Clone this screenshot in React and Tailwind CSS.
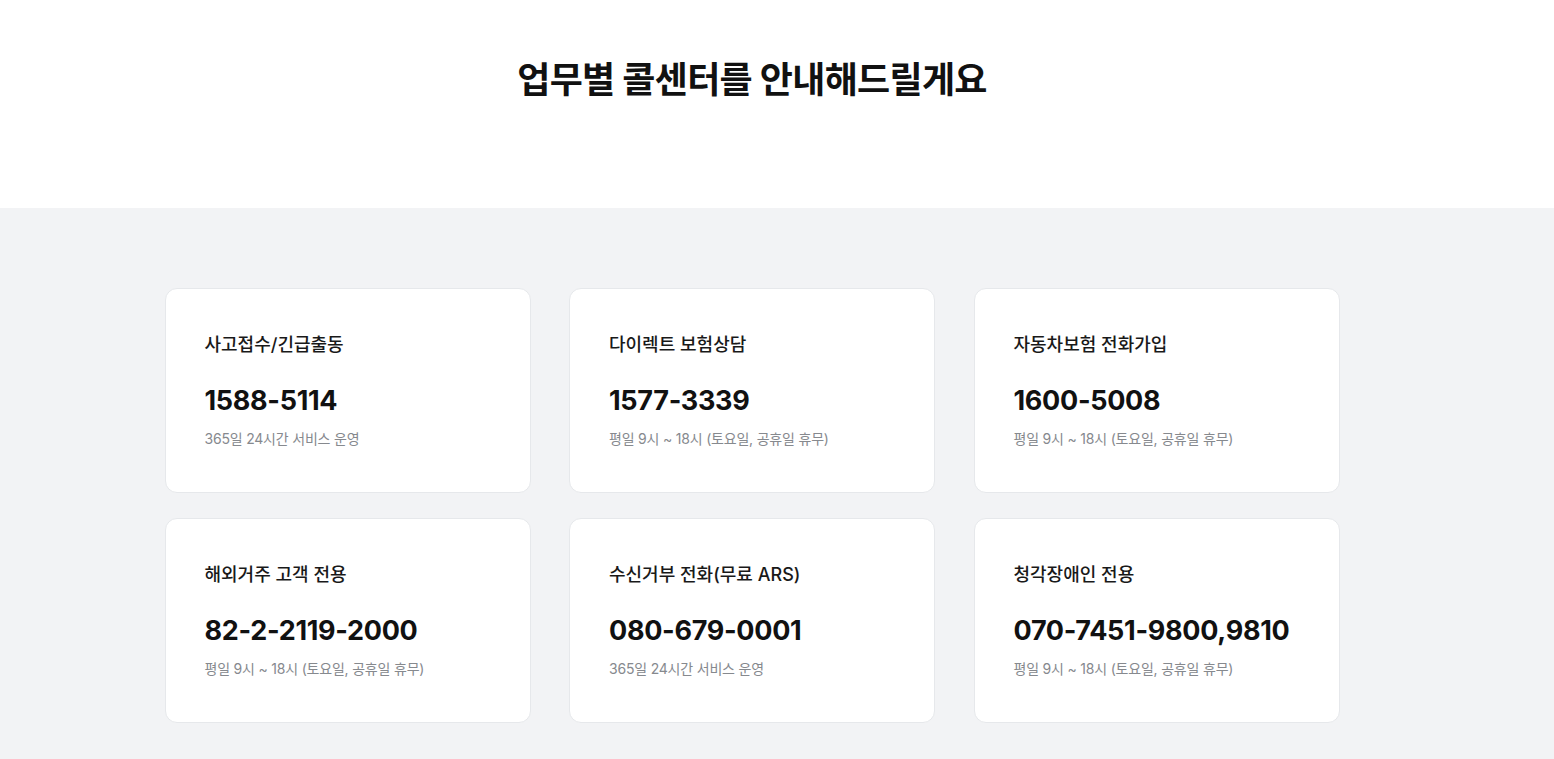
const centers = [
  { name: '사고접수/긴급출동', tel: '1588-5114', desc: '365일 24시간 서비스 운영' },
  { name: '다이렉트 보험상담', tel: '1577-3339', desc: '평일 9시 ~ 18시 (토요일, 공휴일 휴무)' },
  { name: '자동차보험 전화가입', tel: '1600-5008', desc: '평일 9시 ~ 18시 (토요일, 공휴일 휴무)' },
  { name: '해외거주 고객 전용', tel: '82-2-2119-2000', desc: '평일 9시 ~ 18시 (토요일, 공휴일 휴무)' },
  { name: '수신거부 전화(무료 ARS)', tel: '080-679-0001', desc: '365일 24시간 서비스 운영' },
  { name: '청각장애인 전용', tel: '070-7451-9800,9810', desc: '평일 9시 ~ 18시 (토요일, 공휴일 휴무)' },
];

const App = () => {
  return (
    <div className="min-h-screen bg-[#f2f3f5] pr-[50px] font-['Inter','Noto_Sans_CJK_KR',sans-serif] text-[#111]">
      <div className="bg-white h-[208px] pt-[58px] -mr-[50px] pr-[50px]">
        <h1 className="text-center text-[36px] font-bold leading-[44px] tracking-[-0.7px]">업무별 콜센터를 안내해드릴게요</h1>
      </div>

      <div className="w-[1175px] mx-auto pt-[80px] pb-[40px]">
        <div className="grid grid-cols-[repeat(3,366px)] gap-x-[38.5px] gap-y-[25px]">
          {centers.map((c) => (
            <div key={c.tel} className="bg-white border border-[#e6e8eb] rounded-[12px] h-[205px] px-[39px] pt-[43px]">
              <p className="text-[18px] leading-[26px] font-medium text-[#191919]">{c.name}</p>
              <p className="mt-[25px] text-[27px] leading-[36px] font-bold tracking-[-0.3px] whitespace-nowrap">{c.tel}</p>
              <p className="mt-[10px] text-[14px] leading-[20px] tracking-[-0.2px] text-[#86898e]">{c.desc}</p>
            </div>
          ))}
        </div>
      </div>
    </div>
  );
};

export default App;
